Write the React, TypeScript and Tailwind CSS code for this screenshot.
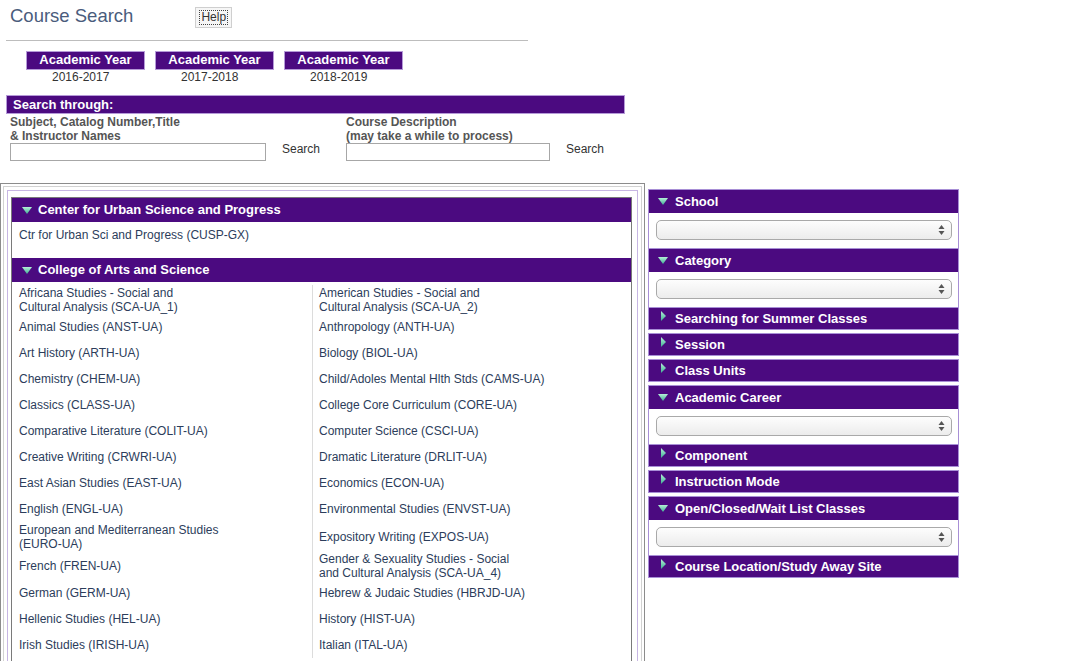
import React from 'react';

const rows: [string, string][] = [
  ['Africana Studies - Social and\nCultural Analysis (SCA-UA_1)', 'American Studies - Social and\nCultural Analysis (SCA-UA_2)'],
  ['Animal Studies (ANST-UA)', 'Anthropology (ANTH-UA)'],
  ['Art History (ARTH-UA)', 'Biology (BIOL-UA)'],
  ['Chemistry (CHEM-UA)', 'Child/Adoles Mental Hlth Stds (CAMS-UA)'],
  ['Classics (CLASS-UA)', 'College Core Curriculum (CORE-UA)'],
  ['Comparative Literature (COLIT-UA)', 'Computer Science (CSCI-UA)'],
  ['Creative Writing (CRWRI-UA)', 'Dramatic Literature (DRLIT-UA)'],
  ['East Asian Studies (EAST-UA)', 'Economics (ECON-UA)'],
  ['English (ENGL-UA)', 'Environmental Studies (ENVST-UA)'],
  ['European and Mediterranean Studies\n(EURO-UA)', 'Expository Writing (EXPOS-UA)'],
  ['French (FREN-UA)', 'Gender & Sexuality Studies - Social\nand Cultural Analysis (SCA-UA_4)'],
  ['German (GERM-UA)', 'Hebrew & Judaic Studies (HBRJD-UA)'],
  ['Hellenic Studies (HEL-UA)', 'History (HIST-UA)'],
  ['Irish Studies (IRISH-UA)', 'Italian (ITAL-UA)'],
];

const filters = [
  { label: 'School', open: true },
  { label: 'Category', open: true },
  { label: 'Searching for Summer Classes' },
  { label: 'Session' },
  { label: 'Class Units' },
  { label: 'Academic Career', open: true },
  { label: 'Component' },
  { label: 'Instruction Mode' },
  { label: 'Open/Closed/Wait List Classes', open: true },
  { label: 'Course Location/Study Away Site' },
];

const years = ['2016-2017', '2017-2018', '2018-2019'];

// little mint arrow used on every purple bar
const Arrow = ({ open }: { open?: boolean }) =>
  open ? (
    <svg width="10" height="7" viewBox="0 0 10 7" className="shrink-0">
      <defs>
        <linearGradient id="mintDown" x1="0" y1="0" x2="0" y2="1">
          <stop offset="0" stopColor="#b4f0d6" />
          <stop offset="1" stopColor="#3fae94" />
        </linearGradient>
      </defs>
      <path d="M0 0 L10 0 L5 7 Z" fill="url(#mintDown)" />
    </svg>
  ) : (
    <svg width="5" height="10" viewBox="0 0 5 10" className="shrink-0 -mt-[5px]">
      <defs>
        <linearGradient id="mintRight" x1="0" y1="0" x2="0" y2="1">
          <stop offset="0" stopColor="#b4f0d6" />
          <stop offset="1" stopColor="#3fae94" />
        </linearGradient>
      </defs>
      <path d="M0 0 L5 5 L0 10 Z" fill="url(#mintRight)" />
    </svg>
  );

const FakeSelect = () => (
  <div className="h-[20px] rounded-[5px] border border-[#a9a9a9] bg-linear-to-b from-[#fdfdfd] to-[#ececec] flex items-center justify-end pr-[6px]">
    <svg width="7" height="12" viewBox="0 0 7 12">
      <path d="M3.5 1 L6.5 5 L0.5 5 Z" fill="#555" />
      <path d="M3.5 11 L6.5 7 L0.5 7 Z" fill="#555" />
    </svg>
  </div>
);

const App: React.FC = () => {
  return (
    <div className="h-[661px] overflow-hidden bg-white font-['Liberation_Sans',Arial,sans-serif]">
      {/* Title */}
      <div className="h-[40px] flex items-start pl-[10px] pt-[5px]">
        <h1 className="text-[18.5px] leading-[22px] text-[#4a5c7c]">Course Search</h1>
        <div className="ml-[62px] mt-[2px] h-[21px] px-[3px] flex items-center border border-[#cfcfcf] bg-[#f6f6f6]">
          <span className="text-[12px] leading-[13px] text-[#333] border border-dotted border-[#444] px-px">Help</span>
        </div>
      </div>
      <div className="ml-[6px] w-[522px] h-px bg-[#bdbdbd]" />

      {/* Academic years */}
      <div className="mt-[10px] ml-[26px] flex gap-[10px]">
        {years.map((y) => (
          <div key={y} className="w-[119px] flex flex-col">
            <div className="h-[19px] bg-[#4b0a80] border border-[#b59ad8] flex items-center justify-center pb-px text-white text-[13px] font-bold">
              Academic Year
            </div>
            <div className="pl-[26px] text-[12px] leading-[15px] text-[#333]">{y}</div>
          </div>
        ))}
      </div>

      {/* Search through */}
      <div className="mt-[10px] ml-[6px] w-[619px] h-[19px] bg-[#4b0a80] border border-[#b59ad8] flex items-center pl-[6px] text-white text-[13px] font-bold">
        Search through:
      </div>
      <div className="flex pl-[10px] h-[68px] pt-px">
        <div className="w-[336px]">
          <div className="text-[12px] leading-[14px] font-bold text-[#555]">
            Subject, Catalog Number,Title
            <br />& Instructor Names
          </div>
          <div className="flex items-center">
            <input className="w-[256px] h-[18px] border border-[#a7a7a7] bg-white" />
            <span className="ml-[16px] -mt-[6px] text-[12px] text-[#333]">Search</span>
          </div>
        </div>
        <div>
          <div className="text-[12px] leading-[14px] font-bold text-[#555]">
            Course Description
            <br />(may take a while to process)
          </div>
          <div className="flex items-center">
            <input className="w-[204px] h-[18px] border border-[#a7a7a7] bg-white" />
            <span className="ml-[16px] -mt-[6px] text-[12px] text-[#333]">Search</span>
          </div>
        </div>
      </div>

      {/* Main */}
      <div className="flex items-start gap-[3px] mt-px">
        {/* Left: schools list */}
        <div className="w-[645px] border border-[#8c8c8c] p-[2px]">
          <div className="border border-[#d2d2d2] p-[3px]">
            <div className="border border-[#c7b6e3] pl-[3px] pr-[5px] pt-[6px]">
              <div className="border-x border-t border-[#7a7a7a]">
                <div className="h-[24px] bg-[#4b0a80] flex items-center gap-[6px] pl-[10px] text-white text-[13px] font-bold">
                  <Arrow open />
                  <span>Center for Urban Science and Progress</span>
                </div>
                <div className="h-[36px] pl-[7px] pt-[6px] text-[12px] leading-[14px] text-[#2c3d5b]">
                  Ctr for Urban Sci and Progress (CUSP-GX)
                </div>
                <div className="h-[24px] bg-[#4b0a80] flex items-center gap-[6px] pl-[10px] text-white text-[13px] font-bold">
                  <Arrow open />
                  <span>College of Arts and Science</span>
                </div>
                <div className="grid grid-cols-[301px_1fr] pt-[3px] pb-[10px]">
                  {rows.map(([a, b], i) => (
                    <React.Fragment key={i}>
                      <div className="min-h-[26px] py-[0.5px] pl-[7px] flex items-center border-r border-[#dcdcdc] text-[12px] leading-[14px] text-[#2c3d5b] whitespace-pre-line">
                        {a}
                      </div>
                      <div className="min-h-[26px] py-[0.5px] pl-[6px] flex items-center text-[12px] leading-[14px] text-[#2c3d5b] whitespace-pre-line">
                        {b}
                      </div>
                    </React.Fragment>
                  ))}
                </div>
              </div>
            </div>
          </div>
        </div>

        {/* Right: filters */}
        <div className="w-[311px] mt-[6px]">
          {filters.map((f) =>
            f.open ? (
              <div key={f.label} className="border-x border-t border-[#a88fd6]">
                <div className="h-[23px] bg-[#4b0a80] flex items-center gap-[7px] pl-[9px] text-white text-[13px] font-bold">
                  <Arrow open />
                  <span>{f.label}</span>
                </div>
                <div className="h-[35px] pl-[7px] pr-[6px] pt-[7px] bg-white">
                  <FakeSelect />
                </div>
              </div>
            ) : (
              <div key={f.label} className="mb-[3px] border border-[#a88fd6]">
                <div className="h-[21px] bg-[#4b0a80] flex items-center gap-[9px] pl-[12px] text-white text-[13px] font-bold">
                  <Arrow />
                  <span>{f.label}</span>
                </div>
              </div>
            )
          )}
        </div>
      </div>
    </div>
  );
};

export default App;
